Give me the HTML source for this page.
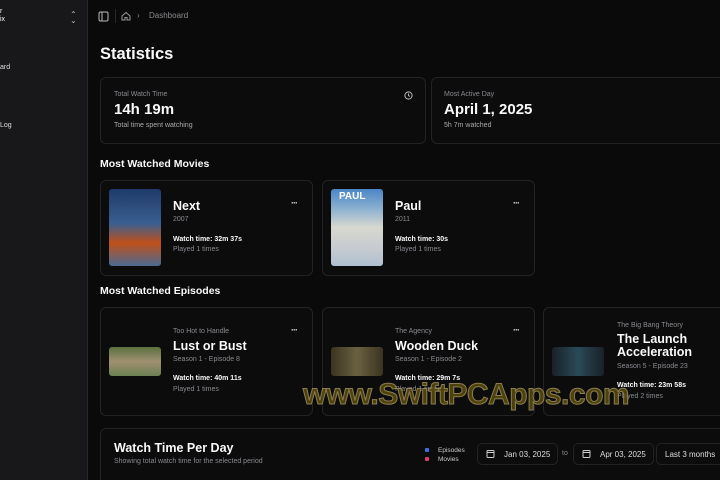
<!DOCTYPE html>
<html style="width:720px;height:480px;overflow:hidden"><head><style>
*{box-sizing:border-box;margin:0;padding:0}
body{width:720px;height:480px;overflow:hidden;background:#0a0a0b;font-family:"Liberation Sans",sans-serif;color:#fafafa;position:relative}
.a{position:absolute;white-space:nowrap}
.side{position:absolute;left:0;top:0;width:88px;height:480px;background:#18181b;border-right:1px solid #27272a}
.card{position:absolute;border:1px solid #232326;border-radius:6px;background:#0c0c0d}
.mut{color:#8a8a8f}
.dots{position:absolute;font-size:9px;font-weight:bold;letter-spacing:-1px;color:#ddd}
.poster{position:absolute;border-radius:3px}
.btn{position:absolute;border:1px solid #232326;border-radius:5px;height:22px;font-size:8px;color:#ddd;padding-top:6px}
</style></head><body>
<div class="side">
<div class="a" style="left:0;top:8px;font-size:7px">r</div>
<div class="a" style="left:0;top:16px;font-size:7px">ix</div>
<div class="a" style="left:70px;top:10px;font-size:8px;color:#bbb">⌃<br></div>
<div class="a" style="left:70px;top:16px;font-size:8px;color:#bbb">⌄</div>
<div class="a" style="left:0;top:64px;font-size:7px;color:#ddd">ard</div>
<div class="a" style="left:0;top:122px;font-size:7px;color:#ddd">Log</div>
</div>
<svg class="a" style="left:98px;top:11px" width="11" height="11" viewBox="0 0 11 11" fill="none" stroke="#bbb" stroke-width="1"><rect x="1" y="1" width="9" height="9" rx="1.5"/><line x1="4" y1="1" x2="4" y2="10"/></svg>
<div class="a" style="left:115px;top:9px;width:1px;height:14px;background:#27272a"></div>
<svg class="a" style="left:121px;top:11px" width="10" height="10" viewBox="0 0 10 10" fill="none" stroke="#999" stroke-width="1"><path d="M1 5L5 1.5L9 5V9H6V6.5H4V9H1Z"/></svg>
<div class="a mut" style="left:137px;top:11px;font-size:8px">›</div>
<div class="a mut" style="left:149px;top:11px;font-size:8px">Dashboard</div>
<div class="a" style="left:100px;top:45px;font-size:16.5px;font-weight:bold">Statistics</div>

<div class="card" style="left:100px;top:77px;width:326px;height:67px"></div>
<div class="a mut" style="left:114px;top:91px;font-size:7px">Total Watch Time</div>
<div class="a" style="left:114px;top:101px;font-size:15px;font-weight:bold">14h 19m</div>
<div class="a mut" style="left:114px;top:122px;font-size:7px;color:#aaa">Total time spent watching</div>
<svg class="a" style="left:404px;top:91px" width="9" height="9" viewBox="0 0 9 9" fill="none" stroke="#bbb" stroke-width="1"><circle cx="4.5" cy="4.5" r="3.6"/><path d="M4.5 2.5V4.5L5.8 5.5"/></svg>
<div class="card" style="left:431px;top:77px;width:300px;height:67px"></div>
<div class="a mut" style="left:444px;top:91px;font-size:7px">Most Active Day</div>
<div class="a" style="left:444px;top:101px;font-size:15px;font-weight:bold">April 1, 2025</div>
<div class="a" style="left:444px;top:122px;font-size:7px;color:#aaa">5h 7m watched</div>

<div class="a" style="left:100px;top:158px;font-size:10.5px;font-weight:bold">Most Watched Movies</div>
<div class="card" style="left:100px;top:180px;width:213px;height:96px"></div>
<div class="poster" style="left:109px;top:189px;width:52px;height:77px;background:linear-gradient(180deg,#1e3a6a 0%,#3a5f90 45%,#c0501a 70%,#4a6a90 100%)"></div>
<div class="a" style="left:173px;top:199px;font-size:12.5px;font-weight:bold">Next</div>
<div class="a mut" style="left:173px;top:216px;font-size:7px">2007</div>
<div class="a" style="left:173px;top:236px;font-size:7px;font-weight:bold">Watch time: 32m 37s</div>
<div class="a mut" style="left:173px;top:246px;font-size:7px">Played 1 times</div>
<div class="dots" style="left:291px;top:198px">···</div>
<div class="card" style="left:322px;top:180px;width:213px;height:96px"></div>
<div class="poster" style="left:331px;top:189px;width:52px;height:77px;background:linear-gradient(180deg,#4a86c6 0%,#8ab0d0 25%,#d8d8d0 50%,#c8ccd0 75%,#b0c0d0 100%)"></div>
<div class="a" style="left:339px;top:191px;font-size:10px;font-weight:bold;color:#fff">PAUL</div>
<div class="a" style="left:395px;top:199px;font-size:12.5px;font-weight:bold">Paul</div>
<div class="a mut" style="left:395px;top:216px;font-size:7px">2011</div>
<div class="a" style="left:395px;top:236px;font-size:7px;font-weight:bold">Watch time: 30s</div>
<div class="a mut" style="left:395px;top:246px;font-size:7px">Played 1 times</div>
<div class="dots" style="left:513px;top:198px">···</div>

<div class="a" style="left:100px;top:285px;font-size:10.5px;font-weight:bold">Most Watched Episodes</div>
<div class="card" style="left:100px;top:307px;width:213px;height:109px"></div>
<div class="poster" style="left:109px;top:347px;width:52px;height:29px;background:linear-gradient(180deg,#5a7040,#a09070 50%,#6a8050)"></div>
<div class="a mut" style="left:173px;top:328px;font-size:7px">Too Hot to Handle</div>
<div class="a" style="left:173px;top:339px;font-size:12.5px;font-weight:bold">Lust or Bust</div>
<div class="a mut" style="left:173px;top:356px;font-size:7px">Season 1 - Episode 8</div>
<div class="a" style="left:173px;top:375px;font-size:7px;font-weight:bold">Watch time: 40m 11s</div>
<div class="a mut" style="left:173px;top:386px;font-size:7px">Played 1 times</div>
<div class="dots" style="left:291px;top:325px">···</div>
<div class="card" style="left:322px;top:307px;width:213px;height:109px"></div>
<div class="poster" style="left:331px;top:347px;width:52px;height:29px;background:linear-gradient(90deg,#3a3420,#6a6040 50%,#3a3420)"></div>
<div class="a mut" style="left:395px;top:328px;font-size:7px">The Agency</div>
<div class="a" style="left:395px;top:339px;font-size:12.5px;font-weight:bold">Wooden Duck</div>
<div class="a mut" style="left:395px;top:356px;font-size:7px">Season 1 - Episode 2</div>
<div class="a" style="left:395px;top:375px;font-size:7px;font-weight:bold">Watch time: 29m 7s</div>
<div class="a mut" style="left:395px;top:386px;font-size:7px">Played 1 times</div>
<div class="dots" style="left:513px;top:325px">···</div>
<div class="card" style="left:543px;top:307px;width:200px;height:109px"></div>
<div class="poster" style="left:552px;top:347px;width:52px;height:29px;background:linear-gradient(90deg,#1a2028,#2a4a58 50%,#1a2028)"></div>
<div class="a mut" style="left:617px;top:322px;font-size:7px">The Big Bang Theory</div>
<div class="a" style="left:617px;top:333px;font-size:12.5px;font-weight:bold;line-height:13px">The Launch<br>Acceleration</div>
<div class="a mut" style="left:617px;top:363px;font-size:7px">Season 5 - Episode 23</div>
<div class="a" style="left:617px;top:382px;font-size:7px;font-weight:bold">Watch time: 23m 58s</div>
<div class="a mut" style="left:617px;top:393px;font-size:7px">Played 2 times</div>

<div class="a" style="left:303px;top:378px;font-size:30px;font-weight:bold;color:#5a4c0c;opacity:.85;-webkit-text-stroke:1px #a09060;letter-spacing:-0.5px">www.SwiftPCApps.com</div>

<div class="card" style="left:100px;top:428px;width:640px;height:60px"></div>
<div class="a" style="left:114px;top:441px;font-size:12.5px;font-weight:bold">Watch Time Per Day</div>
<div class="a mut" style="left:114px;top:458px;font-size:7px">Showing total watch time for the selected period</div>
<div class="a" style="left:425px;top:448px;width:4px;height:4px;background:#3b6fe0;border-radius:1px"></div>
<div class="a" style="left:425px;top:457px;width:4px;height:4px;background:#e03b6a;border-radius:1px"></div>
<div class="a" style="left:438px;top:446px;font-size:6.5px;color:#ccc;line-height:9px">Episodes<br>Movies</div>
<div class="btn" style="left:477px;top:443px;width:81px;padding-left:26px">Jan 03, 2025</div>
<div class="btn" style="left:573px;top:443px;width:81px;padding-left:26px">Apr 03, 2025</div>
<svg class="a" style="left:486px;top:449px" width="9" height="9" viewBox="0 0 9 9" fill="none" stroke="#ccc" stroke-width="1"><rect x="1" y="1.5" width="7" height="7" rx="1"/><line x1="1" y1="3.5" x2="8" y2="3.5"/></svg>
<svg class="a" style="left:582px;top:449px" width="9" height="9" viewBox="0 0 9 9" fill="none" stroke="#ccc" stroke-width="1"><rect x="1" y="1.5" width="7" height="7" rx="1"/><line x1="1" y1="3.5" x2="8" y2="3.5"/></svg>
<div class="a mut" style="left:562px;top:450px;font-size:7px">to</div>
<div class="btn" style="left:656px;top:443px;width:80px;padding-left:8px">Last 3 months</div>
</body></html>
